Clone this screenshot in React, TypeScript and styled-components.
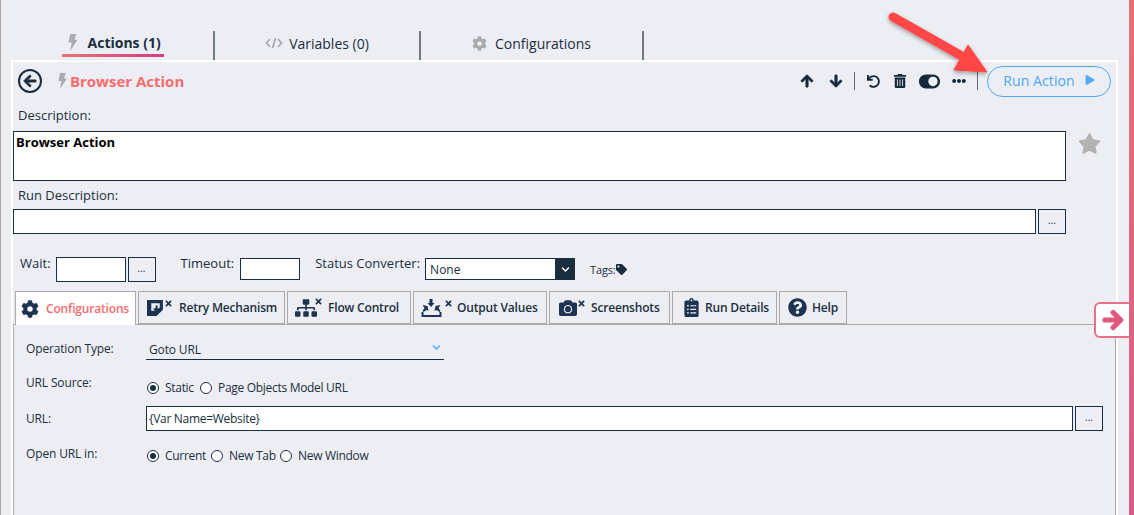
import React from "react";
import styled, { createGlobalStyle } from "styled-components";
import { FaArrowUp, FaArrowDown, FaUndo, FaTrashAlt, FaToggleOn, FaEllipsisH, FaPlay, FaStar, FaTag, FaChevronDown, FaCamera, FaQuestionCircle, FaSitemap, FaTimes, FaCog, FaClipboardList, FaArrowLeft, FaArrowRight } from "react-icons/fa";

const Global = createGlobalStyle`
  html, body { margin: 0; padding: 0; background: #ECEEF4; }
  body { font-family: "Open Sans", "Noto Sans", sans-serif; color: #1B2E40; }
  * { box-sizing: border-box; }
`;

const Page = styled.div`
  position: relative; width: 1134px; height: 515px; overflow: hidden; display: flex;
  background: #ECEEF4; border-left: 1px solid #a8a8a8;
`;
const Main = styled.div`flex: 1; min-width: 0; padding-left: 10px;`;
const RightBar = styled.div`width: 5px; flex: none; background: linear-gradient(180deg, #E07272 0%, #DC6480 60%, #D65A86 100%);`;
const TopTabs = styled.div`display: flex; height: 60px; align-items: flex-end;`;
const TopTab = styled.div<{ $w: number; $pl?: number }>`
  width: ${p => p.$w}px; height: 29px; display: flex; justify-content: ${p => (p.$pl ? "flex-start" : "center")};
  padding-left: ${p => p.$pl ?? 0}px; align-items: flex-start;
  border-right: 2px solid #6f7a85;
`;
const TopLabel = styled.div<{ $active?: boolean; $gap?: number }>`
  display: flex; align-items: center; gap: ${p => p.$gap ?? 6}px; height: 24px;
  font-size: 14px; font-weight: ${p => (p.$active ? 700 : 400)};
  color: #1B2E40; svg { flex: none; }
`;
const Underlined = styled(TopLabel)`
  height: 26px; width: 102px; padding-left: 5px; gap: 10px; border-bottom: 3px solid;
  border-image: linear-gradient(90deg, #e57373, #d63a84) 1;
`;
const Panel = styled.div`
  width: 1107px; height: 455px; border: 2px solid #fff; border-bottom: none; overflow: hidden;
`;
const Header = styled.div`display: flex; align-items: center; height: 37px; padding: 1px 5px 0 5px;`;
const BackBtn = styled.div`
  width: 24px; height: 24px; border: 2px solid #1B2E40; border-radius: 50%;
  display: flex; align-items: center; justify-content: center; color: #1B2E40; font-size: 14px; margin-right: 15px;
  svg { stroke: currentColor; stroke-width: 30; }
`;
const Title = styled.div`
  font-size: 15px; font-weight: 700; color: #F76C6C; margin-left: 3px;
`;
const Tools = styled.div`margin-left: auto; display: flex; align-items: center; color: #14293b;`;
const Tool = styled.div<{ $w: number; $size?: number; $bold?: boolean }>`
  width: ${p => p.$w}px; display: flex; justify-content: center; font-size: ${p => p.$size ?? 14}px;
  ${p => p.$bold && "svg { stroke: currentColor; stroke-width: 30; }"}
`;
const Sep = styled.div`width: 1px; height: 18px; background: #5f6b76; margin: 0 4px;`;
const RunBtn = styled.div`
  width: 124px; height: 31px; border: 1px solid #4DA8F5; border-radius: 16px; margin-left: 5px; padding-bottom: 2px;
  display: flex; align-items: center; justify-content: center; gap: 10px; color: #4DA8F5; font-size: 14px; letter-spacing: 0.1px;
`;
const Label = styled.div<{ $ml?: number; $h?: number }>`
  font-size: 13px; height: ${p => p.$h ?? 20}px; line-height: ${p => p.$h ?? 20}px;
  margin-left: ${p => p.$ml ?? 5}px; white-space: nowrap;
`;
const SettingLabel = styled(Label)<{ $mr?: number }>`
  margin-top: -3px; margin-right: ${p => p.$mr ?? 0}px;
`;
const Row = styled.div<{ $gap?: number; $mt?: number }>`
  display: flex; align-items: flex-start; gap: ${p => p.$gap ?? 2}px; margin-top: ${p => p.$mt ?? 0}px;
`;
const DescBox = styled.div`
  width: 1053px; height: 50px; background: #fff; border: 1px solid #1B2E40; padding: 1px 2px;
  font-size: 13px; font-weight: 700; color: #000; line-height: 18px;
`;
const Star = styled.div`color: #b2b2b2; font-size: 23px; margin: 1px 0 0 12px; line-height: 0;`;
const Field = styled.div<{ $w: number; $h?: number; $mt?: number }>`
  width: ${p => p.$w}px; height: ${p => p.$h ?? 25}px; margin-top: ${p => p.$mt ?? 0}px;
  background: #fff; border: 1px solid #1B2E40; flex: none;
`;
const Dots = styled.div<{ $ml?: number }>`
  width: 28px; height: 25px; border: 1px solid #1B2E40; background: #ECEEF4; flex: none; margin-left: ${p => p.$ml ?? 0}px;
  display: flex; align-items: center; justify-content: center; font-size: 10px; padding-bottom: 3px;
`;
const SettingsRow = styled.div`display: flex; align-items: flex-start; margin-top: 23px; height: 34px;`;
const Select = styled.div`
  width: 150px; height: 22px; background: #fff; border: 1px solid #1B2E40; display: flex; justify-content: space-between;
  font-size: 12px; line-height: 22px; padding-left: 4px; margin: 1px 0 0 5px; color: #1B2E40;
`;
const Chev = styled.div`
  width: 20px; margin: -1px -1px -1px 0; background: #1B2E40; color: #fff; font-size: 9px;
  display: flex; align-items: center; justify-content: center;
`;
const Tags = styled.div`
  display: flex; align-items: center; gap: 1px; font-size: 11px; margin: 2px 0 0 15px; height: 20px; letter-spacing: -0.2px;
`;
const TabsBar = styled.div`display: flex; gap: 2px; padding-left: 2px; height: 34px; position: relative; z-index: 1;`;
const Tab = styled.div<{ $w: number; $pl: number; $active?: boolean }>`
  width: ${p => p.$w}px; height: ${p => (p.$active ? 34 : 33)}px; border: 1px solid #aaa;
  ${p => p.$active && "border-bottom: none;"}
  background: ${p => (p.$active ? "#fff" : "#ECEEF4")};
  display: flex; align-items: center; padding-left: ${p => p.$pl}px;
  font-size: 12px; font-weight: 600; letter-spacing: -0.18px; white-space: nowrap;
  color: ${p => (p.$active ? "#F76C6C" : "#1B2E40")};
`;
const IconSlot = styled.span<{ $w: number }>`
  position: relative; display: inline-flex; align-items: center; width: ${p => p.$w}px; flex: none; color: #1E3350;
`;
const CloseMark = styled(FaTimes)<{ $right: number }>`
  position: absolute; right: ${p => p.$right}px; top: 0; font-size: 9px;
`;
const Content = styled.div`
  border: 1px solid #aaa; border-bottom: none; margin-top: -1px; height: 200px; padding: 15px 11px 0 12px;
`;
const FormRow = styled.div<{ $h: number }>`
  display: flex; height: ${p => p.$h}px; align-items: flex-start;
`;
const FormLabel = styled.div<{ $mt?: number }>`
  width: 121px; font-size: 12px; letter-spacing: -0.15px; line-height: 18px; flex: none; margin-top: ${p => p.$mt ?? 0}px;
`;
const OpSelect = styled.div`
  width: 298px; height: 20px; border-bottom: 1.5px solid #1B2E40; padding-left: 3px; display: flex; justify-content: space-between;
  font-size: 12px; line-height: 20px; margin-left: -1px; padding-right: 3px; letter-spacing: -0.15px; color: #4DA8F5;
  span { color: #1B2E40; } svg { margin-top: 3px; }
`;
const Radios = styled.div<{ $mt: number }>`display: flex; align-items: center; margin-top: ${p => p.$mt}px;`;
const RadioDot = styled.span<{ $on?: boolean }>`
  width: 12px; height: 12px; border: 1px solid #1B2E40; border-radius: 50%; background: #fff; flex: none; margin-right: 6px;
  display: flex; align-items: center; justify-content: center;
  &::after { content: ""; width: 6px; height: 6px; border-radius: 50%; background: ${p => (p.$on ? "#1B2E40" : "transparent")}; }
`;
const RadioText = styled.span<{ $w: number }>`font-size: 12px; width: ${p => p.$w}px; letter-spacing: -0.3px; white-space: nowrap;`;
const UrlRow = styled.div`display: flex; margin-left: -1px;`;
const UrlBox = styled.div`
  width: 927px; height: 25px; background: #fff; border: 1px solid #1B2E40; font-size: 12px; line-height: 23px; padding-left: 2px;
  letter-spacing: -0.3px; flex: none; margin-right: 2px;
`;
const SideTab = styled.div`
  position: absolute; right: 5px; top: 302px; width: 35px; height: 36px; border: 2px solid #E8708A; border-right: none;
  border-radius: 6px 0 0 6px; background: #fff; display: flex; align-items: center; justify-content: center; color: #DE5A7C; font-size: 22px;
  svg { stroke: currentColor; stroke-width: 40; }
`;
const Overlay = styled.svg`position: absolute; left: -1px; top: 0; pointer-events: none;`;

const Bolt = ({ h = 16 }: { h?: number }) => (
  <svg width={h * 0.62} height={h} viewBox="0 0 10 16" fill="#a9abb0"><path d="M3 0h6L7 5.500h3L3 16l1.400-8H1.500z" /></svg>
);

export default function App() {
  return (
    <Page>
      <Global />
      <Main>
        <TopTabs>
          <TopTab $w={204} $pl={51}>
            <Underlined $active><Bolt h={17} />Actions (1)</Underlined>
          </TopTab>
          <TopTab $w={206}>
            <TopLabel><svg width="18" height="12" viewBox="0 0 18 12" fill="none" stroke="#a9abb0" strokeWidth="1.8"><path d="M5 2 1.500 6 5 10M13 2l3.500 4L13 10M10.500 1 7.500 11" /></svg>Variables (0)</TopLabel>
          </TopTab>
          <TopTab $w={223}>
            <TopLabel $gap={8}><FaCog color="#a9abb0" size={15} />Configurations</TopLabel>
          </TopTab>
        </TopTabs>
        <Panel>
          <Header>
            <BackBtn><FaArrowLeft /></BackBtn>
            <Bolt h={16} />
            <Title>Browser Action</Title>
            <Tools>
              <Tool $w={29} $bold><FaArrowUp /></Tool>
              <Tool $w={29} $bold><FaArrowDown /></Tool>
              <Sep />
              <Tool $w={28} $size={13}><FaUndo /></Tool>
              <Tool $w={26} $size={14}><FaTrashAlt /></Tool>
              <Tool $w={32} $size={21}><FaToggleOn /></Tool>
              <Tool $w={28} $size={14}><FaEllipsisH /></Tool>
              <Sep />
              <RunBtn>Run Action<FaPlay size={10} /></RunBtn>
            </Tools>
          </Header>
          <Label style={{ marginTop: 6 }}>Description:</Label>
          <Row $gap={0} $mt={6}>
            <DescBox>Browser Action</DescBox>
            <Star><FaStar /></Star>
          </Row>
          <Label style={{ marginTop: 4 }}>Run Description:</Label>
          <Row $mt={4}>
            <Field $w={1023} />
            <Dots>...</Dots>
          </Row>
          <SettingsRow>
            <SettingLabel $ml={7} $h={18} $mr={5}>Wait:</SettingLabel>
            <Field $w={70} />
            <Dots $ml={2}>...</Dots>
            <SettingLabel $ml={25} $h={18} $mr={6}>Timeout:</SettingLabel>
            <Field $w={60} $h={22} $mt={1} />
            <SettingLabel $ml={15} $h={18}>Status Converter:</SettingLabel>
            <Select>None<Chev><FaChevronDown /></Chev></Select>
            <Tags>Tags:<FaTag size={11} /></Tags>
          </SettingsRow>
          <TabsBar>
            <Tab $w={121} $pl={5} $active><IconSlot $w={25}><FaCog size={18} /></IconSlot>Configurations</Tab>
            <Tab $w={147} $pl={8}>
              <IconSlot $w={32}>
                <svg width="17" height="17" viewBox="0 0 16 16"><path d="M0 1h15v9l-6 6H0z" fill="#1E3350" /><path d="M4 4h8v4L8.500 11H4z" fill="#ECEEF4" /><path d="M8 6v3H5.500L9 13l3.500-4H10V6z" fill="#1E3350" /></svg>
                <CloseMark $right={6} />
              </IconSlot>Retry Mechanism
            </Tab>
            <Tab $w={124} $pl={7}><IconSlot $w={33}><FaSitemap size={22} /><CloseMark $right={5} /></IconSlot>Flow Control</Tab>
            <Tab $w={134} $pl={7}>
              <IconSlot $w={36}>
                <svg width="21" height="18" viewBox="0 0 20 18" fill="#1E3350"><path d="M8 0h3v4h2l-3.500 4L6 4h2zM1 6l5 1 1 5-2-1-3 2-1-1 2-3zM19 6l-5 1-1 5 2-1 3 2 1-1-2-3zM0 13h2v3h16v-3h2v5H0z" /></svg>
                <CloseMark $right={4} />
              </IconSlot>Output Values
            </Tab>
            <Tab $w={121} $pl={9}><IconSlot $w={32}><FaCamera size={18} /><CloseMark $right={5} /></IconSlot>Screenshots</Tab>
            <Tab $w={105} $pl={9}><IconSlot $w={23}><FaClipboardList size={19} /></IconSlot>Run Details</Tab>
            <Tab $w={68} $pl={8}><IconSlot $w={24}><FaQuestionCircle size={19} /></IconSlot>Help</Tab>
          </TabsBar>
          <Content>
            <FormRow $h={34}>
              <FormLabel>Operation Type:</FormLabel>
              <OpSelect><span>Goto URL</span><FaChevronDown size={9} /></OpSelect>
            </FormRow>
            <FormRow $h={32}>
              <FormLabel>URL Source:</FormLabel>
              <Radios $mt={5}>
                <RadioDot $on /><RadioText $w={35}>Static</RadioText>
                <RadioDot /><RadioText $w={131}>Page Objects Model URL</RadioText>
              </Radios>
            </FormRow>
            <FormRow $h={35}>
              <FormLabel $mt={4}>URL:</FormLabel>
              <UrlRow>
                <UrlBox>{"{Var Name=Website}"}</UrlBox>
                <Dots>...</Dots>
              </UrlRow>
            </FormRow>
            <FormRow $h={35}>
              <FormLabel $mt={4}>Open URL in:</FormLabel>
              <Radios $mt={6}>
                <RadioDot $on /><RadioText $w={46}>Current</RadioText>
                <RadioDot /><RadioText $w={51}>New Tab</RadioText>
                <RadioDot /><RadioText $w={71}>New Window</RadioText>
              </Radios>
            </FormRow>
          </Content>
        </Panel>
      </Main>
      <RightBar />
      <SideTab><FaArrowRight /></SideTab>
      <Overlay width="1134" height="515" viewBox="0 0 1134 515">
        <defs>
          <filter id="sh" x="-20%" y="-20%" width="140%" height="140%">
            <feDropShadow dx="0" dy="2" stdDeviation="2" floodColor="#000" floodOpacity="0.35" />
          </filter>
        </defs>
        <g filter="url(#sh)">
          <path d="M893 17 L960 55" stroke="#FF4646" strokeWidth="9" strokeLinecap="round" fill="none" />
          <path d="M968 45 L987 72 L954 70 Z" fill="#FF4646" stroke="#FF4646" strokeWidth="1" />
        </g>
      </Overlay>
    </Page>
  );
}
